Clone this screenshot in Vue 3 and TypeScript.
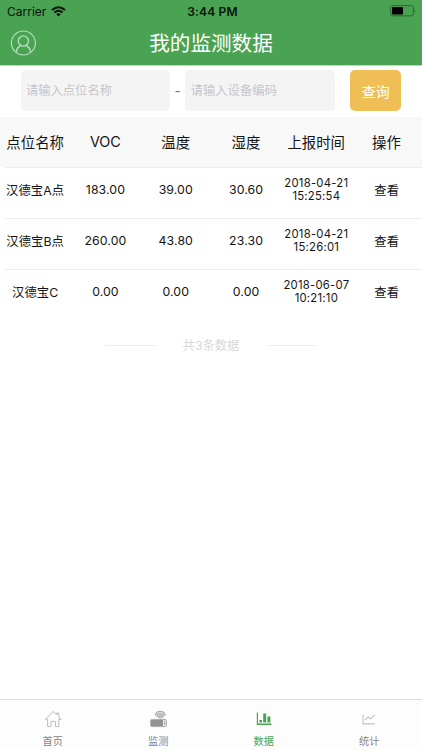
<script setup lang="ts">
interface Row {
  name: string
  voc: string
  temp: string
  hum: string
  date: string
  time: string
}

const headers: string[] = ['点位名称', 'VOC', '温度', '湿度', '上报时间', '操作']
const rows: Row[] = [
  { name: '汉德宝A点', voc: '183.00', temp: '39.00', hum: '30.60', date: '2018-04-21', time: '15:25:54' },
  { name: '汉德宝B点', voc: '260.00', temp: '43.80', hum: '23.30', date: '2018-04-21', time: '15:26:01' },
  { name: '汉德宝C', voc: '0.00', temp: '0.00', hum: '0.00', date: '2018-06-07', time: '10:21:10' },
]
</script>

<template>
  <div class="screen">
    <header class="top">
      <div class="status">
        <div class="carrier">
          <span>Carrier</span>
          <svg width="15" height="11" viewBox="0 0 15 11">
            <path d="M1 4.1Q7.5-1.7 14 4.1" fill="none" stroke="#07140a" stroke-width="2" />
            <path d="M3.3 6.5Q7.5 2.9 11.7 6.5" fill="none" stroke="#07140a" stroke-width="1.8" />
            <path d="M5.2 8.3Q7.5 6.4 9.8 8.3L7.5 10.6Z" fill="#07140a" />
          </svg>
        </div>
        <span class="clock">3:44 PM</span>
        <svg class="battery" width="27" height="12" viewBox="0 0 27 12">
          <rect x="0.6" y="0.6" width="22.8" height="10.2" rx="2" fill="none" stroke="#2b6a32" />
          <rect x="2" y="2" width="11" height="7.4" rx="0.6" fill="#000" />
          <path d="M24.6 4Q26.4 5.7 24.6 7.4Z" fill="#2b6a32" />
        </svg>
      </div>
      <div class="nav">
        <svg class="user" width="26" height="26" viewBox="0 0 26 26" fill="none" stroke="#b4debb" stroke-width="1.1">
          <circle cx="13.4" cy="13" r="12" />
          <circle cx="13.4" cy="11" r="5.1" stroke-width="1.4" />
          <path d="M6.2 22.6C6.6 18.4 9.1 16.2 11 15.5M15.8 15.5C17.7 16.2 20.2 18.4 20.6 22.6" stroke-width="1.4" />
        </svg>
        <h1>我的监测数据</h1>
      </div>
    </header>

    <form class="search" @submit.prevent>
      <input type="text" placeholder="请输入点位名称" />
      <span class="dash">-</span>
      <input type="text" placeholder="请输入设备编码" />
      <button type="submit">查询</button>
    </form>

    <div class="grid head">
      <span v-for="h in headers" :key="h">{{ h }}</span>
    </div>
    <div v-for="r in rows" :key="r.name" class="grid row">
      <span>{{ r.name }}</span>
      <span>{{ r.voc }}</span>
      <span>{{ r.temp }}</span>
      <span>{{ r.hum }}</span>
      <span class="when">{{ r.date }}<br />{{ r.time }}</span>
      <span>查看</span>
    </div>

    <div class="total"><i></i><span>共3条数据</span><i></i></div>

    <nav class="tabs">
      <a class="tab">
        <svg width="20" height="20" viewBox="0 0 20 20" fill="none" stroke="#bcbcbc" stroke-width="1">
          <path d="M4.6 10.4H2.4L10.2 2.4l3.5 3.3V4h2v3.7l2.3 2.7h-2.2v7.2h-3.4v-5.2H8v5.2H4.6Z" stroke-linejoin="round" />
        </svg>
        <span>首页</span>
      </a>
      <a class="tab">
        <svg width="20" height="20" viewBox="0 0 20 20">
          <rect x="2.6" y="10.4" width="15.8" height="7.2" rx="1.2" fill="#efefef" stroke="#aaa" />
          <rect x="3" y="11" width="12" height="6" fill="#929292" />
          <path d="M16.6 11.5v4.8M12.2 7v3.5" stroke="#aaa" stroke-width="1.1" />
          <path d="M7.4 6.6C7.2 .8 17.4 .8 17.2 6.6L15 9H9.6Z" fill="#dedede" />
          <path d="M7.4 6.6C7.2 .8 17.4 .8 17.2 6.6M9.2 7.6C9.2 3.7 15.4 3.7 15.4 7.6M10.8 9Q10.8 6.8 12.3 6.8T13.8 9" fill="none" stroke="#a4a4a4" stroke-width="1.1" />
        </svg>
        <span>监测</span>
      </a>
      <a class="tab active">
        <svg width="20" height="20" viewBox="0 0 20 20" fill="#4aa352">
          <path d="M2.8 3.4h1.2v11.2h13.4v1.3H2.8Z" />
          <path d="M5.4 11h2.6v2.6H5.4ZM9.2 4.6h3v9H9.2ZM13.4 7.6h3v6h-3Z" />
        </svg>
        <span>数据</span>
      </a>
      <a class="tab">
        <svg width="20" height="20" viewBox="0 0 20 20" fill="none" stroke="#c1c1c1" stroke-width="1.1">
          <path d="M4 5.5v9.4h11.8M6 11.2l3.2-3.2 2.6 1.8 4-4" />
        </svg>
        <span>统计</span>
      </a>
    </nav>
  </div>
</template>

<style>
body {
  margin: 0;
  background: #fff;
}
</style>

<style scoped>
.screen {
  display: flex;
  flex-direction: column;
  width: 422px;
  height: 750px;
  overflow: hidden;
  background: #fff;
  color: #141414;
  font-family: Inter, 'Noto Sans CJK SC', sans-serif;
}
.top {
  height: 66px;
  flex: none;
  background: #4aa352;
  border-bottom: 1px solid #b9dcbc;
  box-sizing: border-box;
}
.status {
  display: grid;
  grid-template-columns: 1fr auto 1fr;
  align-items: center;
  height: 22px;
  padding: 0 5px 0 7px;
  box-sizing: border-box;
  font-size: 12px;
  color: #07140a;
}
.carrier {
  display: flex;
  align-items: center;
  gap: 5px;
}
.clock {
  padding-left: 1px;
  font-weight: 600;
  letter-spacing: 0.15px;
}
.battery {
  justify-self: end;
}
.nav {
  display: grid;
  grid-template-columns: 26px 1fr 26px;
  align-items: center;
  height: 42px;
  padding: 0 10px;
}
.user {
  margin-bottom: 1px;
}
h1 {
  margin: 0;
  padding-top: 1px;
  text-align: center;
  color: #fff;
  font-size: 20.6px;
  line-height: 42px;
  font-weight: 400;
}
.search {
  display: flex;
  flex: none;
  align-items: center;
  height: 51px;
  padding: 0 20.6px 2px;
  box-sizing: border-box;
}
input {
  width: 149.5px;
  height: 41px;
  padding: 0 5.3px;
  box-sizing: border-box;
  border: 0;
  border-radius: 5px;
  background: #f4f4f4;
  font-family: inherit;
  font-size: 12.3px;
}
input::placeholder {
  color: #c5c5ca;
  opacity: 1;
}
.dash {
  width: 15.3px;
  text-align: center;
  font-size: 14px;
  color: #777;
}
button {
  width: 51px;
  height: 41px;
  margin-left: 15.4px;
  padding: 0;
  border: 0;
  border-radius: 5px;
  background: #efbf55;
  color: #fff;
  font-family: inherit;
  font-size: 14px;
}
.grid {
  display: grid;
  flex: none;
  grid-template-columns: repeat(6, 1fr);
  align-items: center;
  text-align: center;
  white-space: nowrap;
}
.head {
  height: 50px;
  padding: 0 0.4px 1px 0;
  box-sizing: border-box;
  background: #f8f8f8;
  font-size: 14.4px;
}
.row {
  position: relative;
  height: 51px;
  padding: 0 0.2px 6px 0;
  box-sizing: border-box;
  font-size: 12.3px;
  letter-spacing: 0.1px;
}
.row::before {
  content: '';
  position: absolute;
  top: 0;
  left: 5px;
  right: 0;
  height: 1px;
  background: #ededed;
}
.when {
  padding-top: 1px;
  font-size: 11.3px;
  line-height: 13px;
  letter-spacing: 0.25px;
}
.total {
  display: flex;
  flex: none;
  align-items: center;
  justify-content: center;
  height: 20px;
  margin-top: 15px;
  gap: 27px;
  color: #d7d7d7;
  font-size: 12.3px;
}
.total i {
  width: 51px;
  height: 1px;
  background: #eee;
}
.tabs {
  display: grid;
  grid-template-columns: repeat(4, 1fr);
  height: 51px;
  margin-top: auto;
  border-top: 1px solid #dcdcdc;
  box-sizing: border-box;
  background: #fdfdfd;
}
.tab {
  display: flex;
  flex-direction: column;
  align-items: center;
  padding-top: 9px;
  color: #858585;
  font-size: 10.2px;
  line-height: 14px;
}
.tab span {
  margin-top: 5px;
}
.active {
  color: #4aa352;
}
</style>
